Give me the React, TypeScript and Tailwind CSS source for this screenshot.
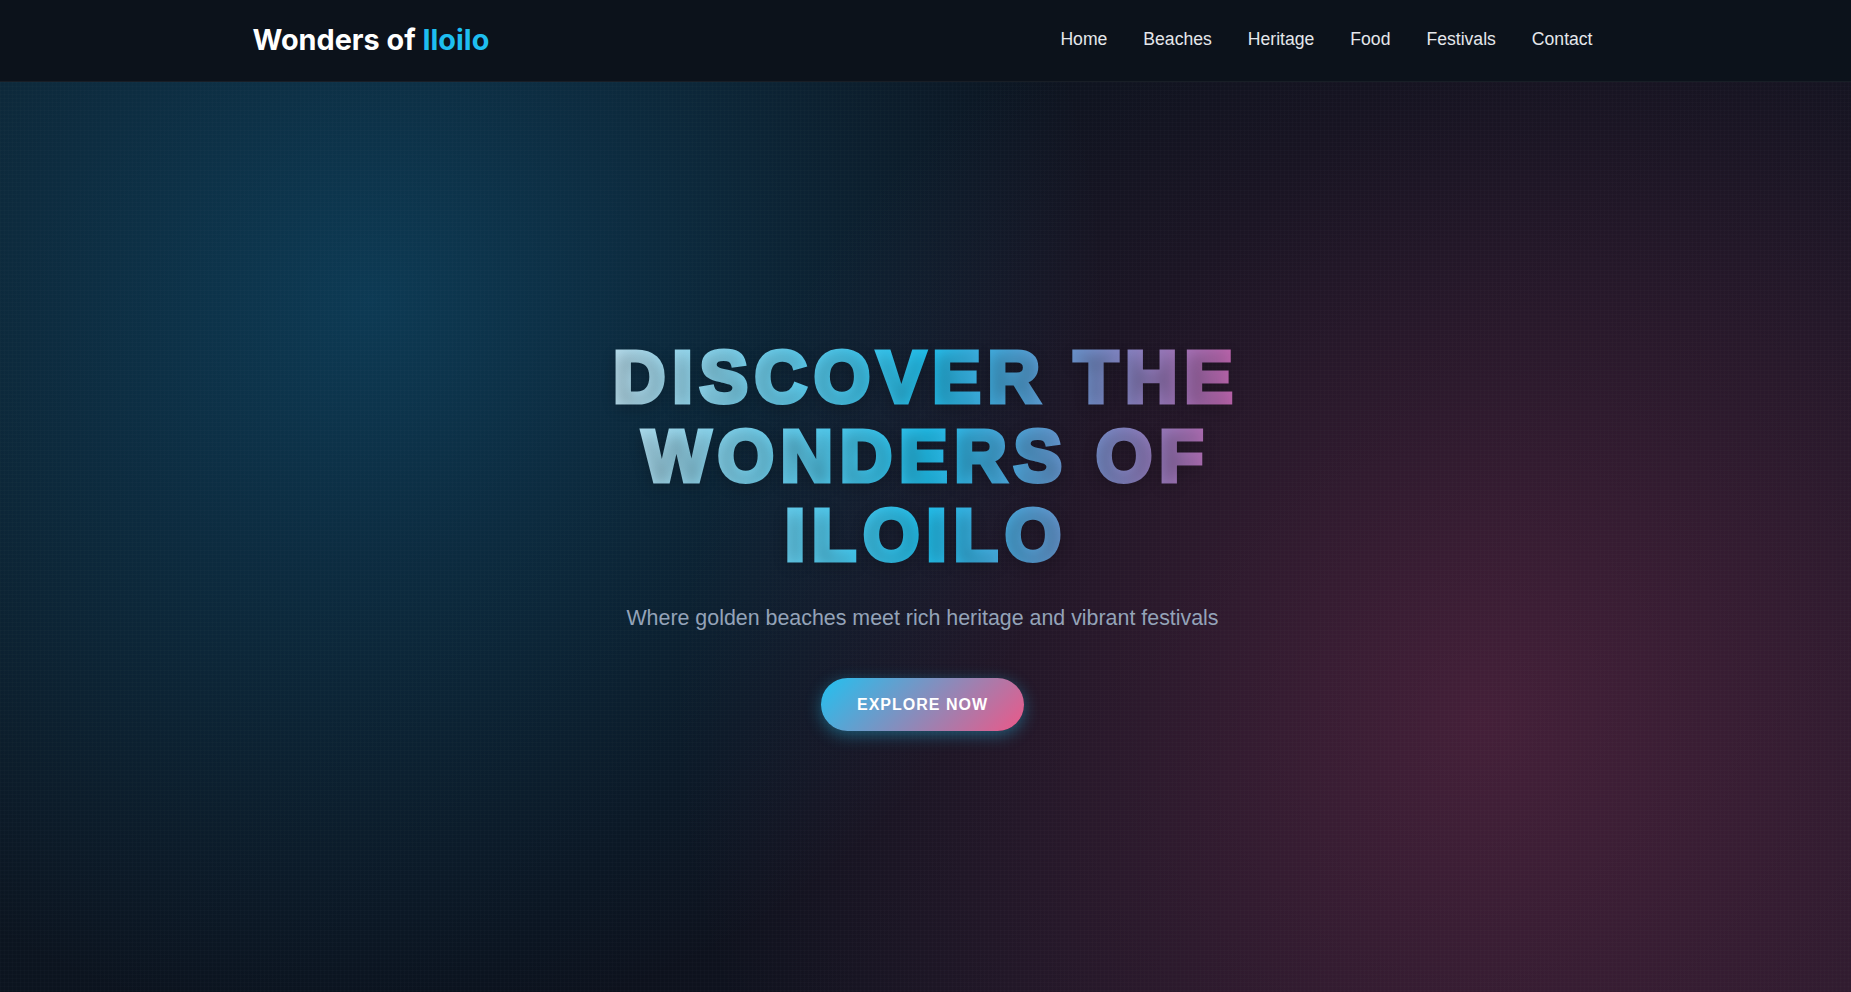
export default function App() {
  const links = ["Home", "Beaches", "Heritage", "Food", "Festivals", "Contact"];

  return (
    <div className="flex flex-col min-h-screen bg-[#0b111c] font-['Liberation_Sans',Arial,sans-serif]">
      <nav className="h-[82px] shrink-0 pr-[6px] bg-[#0c121b] border-b border-white/5">
        <div className="flex items-center justify-between h-full w-[1340px] mx-auto pb-[2px]">
          <a href="#" className="font-['Inter',sans-serif] text-[28.8px] font-bold text-white">
            Wonders of <span className="text-[#1ebef0]">Iloilo</span>
          </a>
          <ul className="flex items-center gap-[36px]">
            {links.map((l) => (
              <li key={l}>
                <a href="#" className="text-[17.6px] text-[#e5e7eb] hover:text-[#1ebef0]">
                  {l}
                </a>
              </li>
            ))}
          </ul>
        </div>
      </nav>

      <section className="flex-1 flex items-center justify-center pr-[6px] pb-[7px] bg-[image:linear-gradient(rgba(255,255,255,0.01)_1px,transparent_1px),linear-gradient(90deg,rgba(255,255,255,0.01)_1px,transparent_1px),radial-gradient(circle_at_20%_24%,rgba(14,165,233,0.25),transparent_45%),radial-gradient(circle_at_80%_70%,rgba(236,72,140,0.22),transparent_50%),linear-gradient(135deg,#0d1a26_0%,#0b111c_50%,#1d1726_100%)] bg-[size:4px_4px,4px_4px,auto,auto,auto]">
        <div className="flex flex-col items-center text-center">
          <h1 className="ml-[8px] mt-[2px] max-w-[800px] text-[72px] leading-[1.1] font-bold uppercase tracking-[0.1em] text-transparent bg-clip-text bg-[image:linear-gradient(90deg,#e2e8f0_0%,#22c1ee_50%,#ec4899_100%)] [-webkit-text-stroke:5px_transparent] [text-shadow:0_4px_16px_rgba(0,0,0,0.32)]">
            Discover the Wonders of Iloilo
          </h1>
          <p className="mt-[25px] text-[21.4px] leading-[1.6] text-[#94a3b8]">
            Where golden beaches meet rich heritage and vibrant festivals
          </p>
          <a
            href="#"
            className="mt-[43px] rounded-full px-[36px] py-[17px] text-[16px] leading-[19px] font-semibold tracking-[1px] text-white uppercase bg-[image:linear-gradient(135deg,#22c1f0,#ec5888)] shadow-[0_4px_16px_rgba(34,193,238,0.4)]"
          >
            Explore Now
          </a>
        </div>
      </section>
    </div>
  );
}
